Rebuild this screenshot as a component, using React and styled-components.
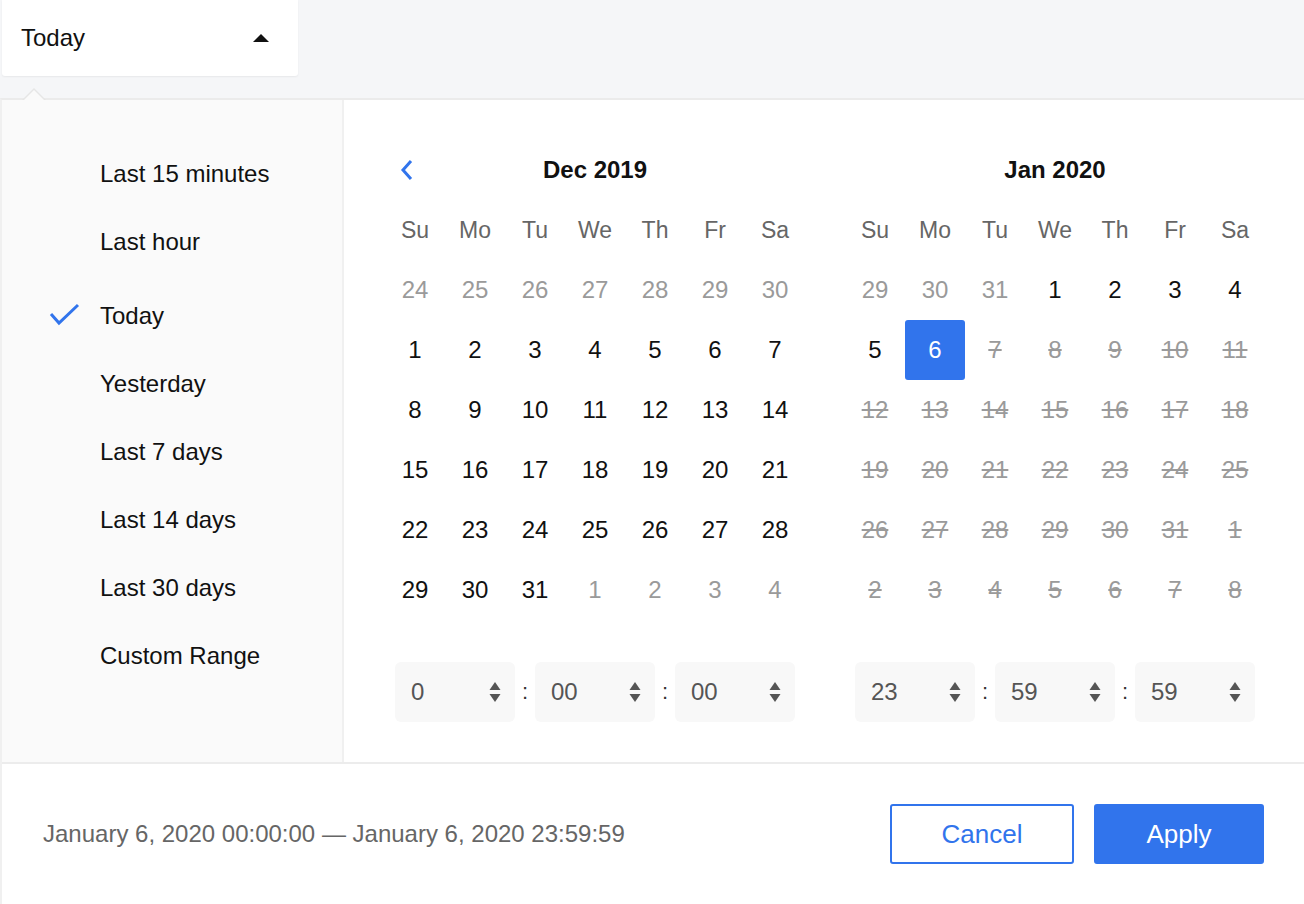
import React, { useState } from "react";
import styled, { createGlobalStyle, css } from "styled-components";

const GlobalStyle = createGlobalStyle`
  html, body {
    margin: 0;
    padding: 0;
    background: #f5f6f8;
    font-family: "Liberation Sans", Arial, Helvetica, sans-serif;
  }
  * { box-sizing: border-box; }
`;

const BLUE = "#3174ec";

const Page = styled.div`
  width: 1304px;
  height: 904px;
  display: flex;
  flex-direction: column;
  overflow: hidden;
`;

const TopBar = styled.div`
  height: 98px;
  padding-left: 2px;
  position: relative;
`;

const Trigger = styled.button`
  width: 296px;
  height: 76px;
  background: #fff;
  border: none;
  border-radius: 0 0 3px 3px;
  box-shadow: 0 1px 2px rgba(0, 0, 0, 0.06);
  display: flex;
  align-items: center;
  justify-content: space-between;
  padding: 0 28px 0 19px;
  font-family: inherit;
  font-size: 24px;
  color: #111;
  cursor: pointer;
`;

const Caret = styled.div`
  position: absolute;
  left: 22px;
  bottom: -2px;
  width: 0;
  height: 0;
  border-left: 12px solid transparent;
  border-right: 12px solid transparent;
  border-bottom: 12px solid #e6e6e6;
  z-index: 2;

  &::after {
    content: "";
    position: absolute;
    left: -10px;
    top: 2px;
    border-left: 10px solid transparent;
    border-right: 10px solid transparent;
    border-bottom: 10px solid #fafafa;
  }
`;

const Panel = styled.div`
  flex: 1;
  display: flex;
  flex-direction: column;
  border-top: 2px solid #ebebeb;
  border-left: 2px solid #f0f0f0;
  background: #fff;
`;

const Body = styled.div`
  display: flex;
  height: 664px;
  border-bottom: 2px solid #ececec;
`;

const Sidebar = styled.ul`
  width: 342px;
  margin: 0;
  padding: 40px 0 0 0;
  list-style: none;
  background: #fafafa;
  border-right: 2px solid #f0f0f0;
`;

const Preset = styled.li`
  position: relative;
  height: 68px;
  display: flex;
  align-items: center;
  padding-left: 98px;
  font-size: 24px;
  color: #111;
  cursor: pointer;
  ${(p) =>
    p.$active &&
    css`
      margin-top: 6px;
    `}
`;

const Check = styled.svg`
  position: absolute;
  left: 45px;
  top: 50%;
  transform: translateY(-50%);
`;

const Calendars = styled.div`
  flex: 1;
  display: flex;
  gap: 40px;
  padding: 40px 39px 40px 41px;
  background: #fff;
`;

const Month = styled.div`
  width: 420px;
  display: flex;
  flex-direction: column;
`;

const Grid = styled.div`
  display: grid;
  grid-template-columns: repeat(7, 60px);
  grid-auto-rows: 60px;
`;

const NavButton = styled.button`
  grid-column: 1;
  border: none;
  background: transparent;
  padding: 0 0 0 14px;
  display: flex;
  align-items: center;
  justify-content: flex-start;
  cursor: pointer;
`;

const Title = styled.div`
  grid-column: 2 / span 5;
  display: flex;
  align-items: center;
  justify-content: center;
  font-size: 24px;
  font-weight: 700;
  color: #111;
`;

const WeekDay = styled.div`
  display: flex;
  align-items: center;
  justify-content: center;
  font-size: 23px;
  color: #666;
`;

const Day = styled.div`
  display: flex;
  align-items: center;
  justify-content: center;
  font-size: 24px;
  border-radius: 3px;
  color: ${(p) => (p.$muted || p.$disabled ? "#9a9a9a" : "#111")};
  text-decoration: ${(p) => (p.$disabled ? "line-through" : "none")};
  ${(p) =>
    p.$selected &&
    css`
      background: ${BLUE};
      color: #fff;
    `}
`;

const TimeRow = styled.div`
  margin-top: 42px;
  display: flex;
  align-items: center;
  justify-content: center;
`;

const Colon = styled.span`
  width: 20px;
  text-align: center;
  font-size: 22px;
  color: #333;
`;

const TimeSelect = styled.div`
  width: 120px;
  height: 60px;
  background: #f8f8f8;
  border-radius: 6px;
  display: flex;
  align-items: center;
  justify-content: space-between;
  padding: 0 14px 0 16px;
  font-size: 24px;
  color: #555;
`;

const Footer = styled.div`
  flex: 1;
  display: flex;
  align-items: center;
  justify-content: space-between;
  padding: 0 40px 0 41px;
  background: #fff;
`;

const Summary = styled.div`
  font-size: 24px;
  color: #666;
`;

const Actions = styled.div`
  display: flex;
  gap: 20px;
`;

const ActionButton = styled.button`
  height: 60px;
  width: ${(p) => (p.$primary ? "170px" : "184px")};
  border-radius: 3px;
  border: 2px solid ${BLUE};
  background: ${(p) => (p.$primary ? BLUE : "#fff")};
  color: ${(p) => (p.$primary ? "#fff" : BLUE)};
  font-family: inherit;
  font-size: 26px;
  cursor: pointer;
`;

const presets = [
  "Last 15 minutes",
  "Last hour",
  "Today",
  "Yesterday",
  "Last 7 days",
  "Last 14 days",
  "Last 30 days",
  "Custom Range",
];

const weekDays = ["Su", "Mo", "Tu", "We", "Th", "Fr", "Sa"];

const range = (a, b) => Array.from({ length: b - a + 1 }, (_, i) => a + i);

const decDays = [
  ...range(24, 30).map((d) => ({ d, muted: true })),
  ...range(1, 31).map((d) => ({ d })),
  ...range(1, 4).map((d) => ({ d, muted: true })),
];

const janDays = [
  ...range(29, 31).map((d) => ({ d, muted: true })),
  ...range(1, 6).map((d) => ({ d, selected: d === 6 })),
  ...range(7, 31).map((d) => ({ d, disabled: true })),
  ...range(1, 8).map((d) => ({ d, disabled: true })),
];

const Arrows = () => (
  <svg width="12" height="22" viewBox="0 0 12 22">
    <path d="M6 1 L11.5 9 H0.5 Z" fill="#555" />
    <path d="M6 21 L11.5 13 H0.5 Z" fill="#555" />
  </svg>
);

const Time = ({ h, m, s }) => (
  <TimeRow>
    <TimeSelect>
      {h}
      <Arrows />
    </TimeSelect>
    <Colon>:</Colon>
    <TimeSelect>
      {m}
      <Arrows />
    </TimeSelect>
    <Colon>:</Colon>
    <TimeSelect>
      {s}
      <Arrows />
    </TimeSelect>
  </TimeRow>
);

const Calendar = ({ title, days, showPrev, time }) => (
  <Month>
    <Grid>
      {showPrev ? (
        <NavButton aria-label="Previous month">
          <svg width="16" height="22" viewBox="0 0 16 22">
            <path
              d="M12 2 L4 11 L12 20"
              fill="none"
              stroke={BLUE}
              strokeWidth="3"
            />
          </svg>
        </NavButton>
      ) : (
        <div />
      )}
      <Title>{title}</Title>
      <div />
      {weekDays.map((w) => (
        <WeekDay key={w}>{w}</WeekDay>
      ))}
      {days.map((x, i) => (
        <Day
          key={i}
          $muted={x.muted}
          $disabled={x.disabled}
          $selected={x.selected}
        >
          {x.d}
        </Day>
      ))}
    </Grid>
    <Time {...time} />
  </Month>
);

export default function App() {
  const [active, setActive] = useState("Today");

  return (
    <>
      <GlobalStyle />
      <Page>
        <TopBar>
          <Trigger>
            Today
            <svg width="18" height="10" viewBox="0 0 18 10">
              <path d="M9 1 L17 9 H1 Z" fill="#111" />
            </svg>
          </Trigger>
          <Caret />
        </TopBar>
        <Panel>
          <Body>
            <Sidebar>
              {presets.map((p) => (
                <Preset
                  key={p}
                  $active={p === active}
                  onClick={() => setActive(p)}
                >
                  {p === active && (
                    <Check width="34" height="28" viewBox="0 0 34 28">
                      <path
                        d="M4 12 L12 21 L31 3"
                        fill="none"
                        stroke={BLUE}
                        strokeWidth="3"
                      />
                    </Check>
                  )}
                  {p}
                </Preset>
              ))}
            </Sidebar>
            <Calendars>
              <Calendar
                title="Dec 2019"
                days={decDays}
                showPrev
                time={{ h: "0", m: "00", s: "00" }}
              />
              <Calendar
                title="Jan 2020"
                days={janDays}
                time={{ h: "23", m: "59", s: "59" }}
              />
            </Calendars>
          </Body>
          <Footer>
            <Summary>
              January 6, 2020 00:00:00 — January 6, 2020 23:59:59
            </Summary>
            <Actions>
              <ActionButton>Cancel</ActionButton>
              <ActionButton $primary>Apply</ActionButton>
            </Actions>
          </Footer>
        </Panel>
      </Page>
    </>
  );
}
